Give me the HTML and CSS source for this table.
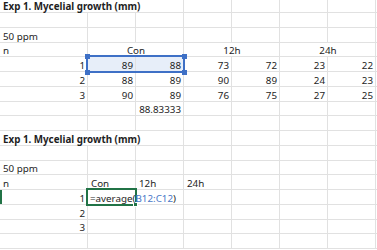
FILE: index.html
```html
<!DOCTYPE html>
<html>
<head>
<meta charset="utf-8">
<link rel="stylesheet" href="styles.css">
</head>
<body>
<div class="sheet">
  <div class="row">
    <div class="c span3 b">Exp 1. Mycelial growth (mm)</div><div class="c"></div><div class="c"></div><div class="c"></div><div class="c"></div><div class="c"></div>
  </div>
  <div class="row">
    <div class="c"></div><div class="c"></div><div class="c"></div><div class="c"></div><div class="c"></div><div class="c"></div><div class="c"></div><div class="c"></div>
  </div>
  <div class="row">
    <div class="c">50 ppm</div><div class="c"></div><div class="c"></div><div class="c"></div><div class="c"></div><div class="c"></div><div class="c"></div><div class="c"></div>
  </div>
  <div class="row">
    <div class="c">n</div><div class="c span2 ctr">Con</div><div class="c span2 ctr">12h</div><div class="c span2 ctr">24h</div><div class="c"></div>
  </div>
  <div class="row">
    <div class="c r">1</div><div class="c r sel anchor">89<div class="range"><i class="hd tl"></i><i class="hd tr"></i><i class="hd bl"></i><i class="hd br"></i></div></div><div class="c r sel">88</div><div class="c r">73</div><div class="c r">72</div><div class="c r">23</div><div class="c r">22</div><div class="c"></div>
  </div>
  <div class="row">
    <div class="c r">2</div><div class="c r">88</div><div class="c r">89</div><div class="c r">90</div><div class="c r">89</div><div class="c r">24</div><div class="c r">23</div><div class="c"></div>
  </div>
  <div class="row">
    <div class="c r">3</div><div class="c r">90</div><div class="c r">89</div><div class="c r">76</div><div class="c r">75</div><div class="c r">27</div><div class="c r">25</div><div class="c"></div>
  </div>
  <div class="row">
    <div class="c"></div><div class="c"></div><div class="c r">88.83333</div><div class="c"></div><div class="c"></div><div class="c"></div><div class="c"></div><div class="c"></div>
  </div>
  <div class="row">
    <div class="c"></div><div class="c"></div><div class="c"></div><div class="c"></div><div class="c"></div><div class="c"></div><div class="c"></div><div class="c"></div>
  </div>
  <div class="row">
    <div class="c span3 b">Exp 1. Mycelial growth (mm)</div><div class="c"></div><div class="c"></div><div class="c"></div><div class="c"></div><div class="c"></div>
  </div>
  <div class="row">
    <div class="c"></div><div class="c"></div><div class="c"></div><div class="c"></div><div class="c"></div><div class="c"></div><div class="c"></div><div class="c"></div>
  </div>
  <div class="row">
    <div class="c">50 ppm</div><div class="c"></div><div class="c"></div><div class="c"></div><div class="c"></div><div class="c"></div><div class="c"></div><div class="c"></div>
  </div>
  <div class="row">
    <div class="c">n</div><div class="c">Con</div><div class="c">12h</div><div class="c">24h</div><div class="c"></div><div class="c"></div><div class="c"></div><div class="c"></div>
  </div>
  <div class="row">
    <div class="c r mark">1</div><div class="c formula anchor"><div class="active"><i class="fillh"></i></div><span class="ftext">=average(<span class="ref">B12:C12</span>)</span><span class="caret"></span></div><div class="c"></div><div class="c"></div><div class="c"></div><div class="c"></div><div class="c"></div><div class="c"></div>
  </div>
  <div class="row">
    <div class="c r">2</div><div class="c"></div><div class="c"></div><div class="c"></div><div class="c"></div><div class="c"></div><div class="c"></div><div class="c"></div>
  </div>
  <div class="row">
    <div class="c r">3</div><div class="c"></div><div class="c"></div><div class="c"></div><div class="c"></div><div class="c"></div><div class="c"></div><div class="c"></div>
  </div>
  <div class="row">
    <div class="c"></div><div class="c"></div><div class="c"></div><div class="c"></div><div class="c"></div><div class="c"></div><div class="c"></div><div class="c"></div>
  </div>
</div>
</body>
</html>
```

FILE: styles.css
```css
html, body {
  margin: 0;
  padding: 0;
  background: #ffffff;
}
body {
  width: 377px;
  height: 250px;
  overflow: hidden;
  font-family: "Noto Sans", "Open Sans", sans-serif;
  font-size: 9.8px;
  color: #1e1e1e;
}
.sheet {
  margin-top: -1.78px;
  display: flex;
  flex-direction: column;
}
.row {
  display: grid;
  grid-template-columns: 88px repeat(7, 48px);
  height: 14.78px;
  flex: none;
}
.c {
  border-right: 1px solid #e1e1e1;
  border-bottom: 1px solid #e1e1e1;
  padding: 0 2px 0 3px;
  white-space: nowrap;
  display: flex;
  align-items: flex-end;
  line-height: 11px;
  min-width: 0;
}
.r { justify-content: flex-end; padding-right: 2px; }
.ctr { justify-content: center; }
.span2 { grid-column: span 2; }
.span3 { grid-column: span 3; }
.b { font-weight: 700; }
.sel { background: #e7eef9; }
.anchor { position: relative; }
.range {
  position: absolute;
  left: -2px;
  top: -2px;
  width: 99px;
  height: 17.78px;
  box-sizing: border-box;
  border: 2px solid #3e70c6;
}
.hd {
  position: absolute;
  width: 5px;
  height: 5px;
  background: #3e70c6;
}
.tl { left: -3.5px; top: -3.5px; }
.tr { right: -3.5px; top: -3.5px; }
.bl { left: -3.5px; bottom: -3.5px; }
.br { right: -3.5px; bottom: -3.5px; }
.mark { box-shadow: inset 2px 0 0 #217346; }
.formula { overflow: visible; padding-left: 2px; }
.ftext { position: relative; }
.ref { color: #4a78c8; }
.caret {
  position: relative;
  display: inline-block;
  width: 1px;
  height: 11px;
  background: #1e1e1e;
  margin-left: 2px;
}
.active {
  position: absolute;
  left: -2px;
  top: -2px;
  width: 51px;
  height: 17.78px;
  box-sizing: border-box;
  border: 2px solid #217346;
}
.fillh {
  position: absolute;
  right: -3px;
  bottom: -3px;
  width: 3px;
  height: 3px;
  background: #217346;
  border: 1px solid #ffffff;
}
```
